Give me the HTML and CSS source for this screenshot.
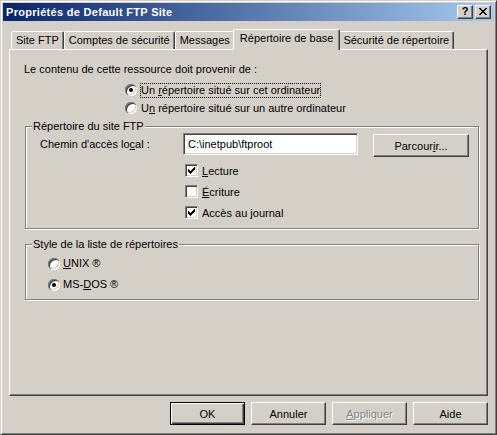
FILE: index.html
```html
<!DOCTYPE html>
<html lang="fr">
<head>
<meta charset="utf-8">
<title>Propriétés de Default FTP Site</title>
<link rel="stylesheet" href="styles.css">
</head>
<body>
<div class="window">
  <div class="titlebar">
    <span class="title">Propriétés de Default FTP Site</span>
    <div class="cbtns">
      <span class="cbtn help">?</span>
      <span class="cbtn close"><svg width="8" height="7" viewBox="0 0 8 7" shape-rendering="crispEdges"><path d="M0 0h2v1H0z M6 0h2v1H6z M1 1h2v1H1z M5 1h2v1H5z M2 2h4v1H2z M3 3h2v1H3z M2 4h4v1H2z M1 5h2v1H1z M5 5h2v1H5z M0 6h2v1H0z M6 6h2v1H6z" fill="#000"/></svg></span>
    </div>
  </div>
  <div class="client">
    <div class="tabs">
      <div class="tab">Site FTP</div>
      <div class="tab">Comptes de sécurité</div>
      <div class="tab">Messages</div>
      <div class="tab active">Répertoire de base</div>
      <div class="tab">Sécurité de répertoire</div>
    </div>
    <div class="panel">
      <div class="intro">Le contenu de cette ressource doit provenir de :</div>
      <div class="source-options">
        <div class="opt"><span class="radio checked"></span><span class="lbl focus">Un <u>r</u>épertoire situé sur cet ordinateur</span></div>
        <div class="opt"><span class="radio"></span><span class="lbl">U<u>n</u> répertoire situé sur un autre ordinateur</span></div>
      </div>
      <div class="group g1">
        <span class="group-label">Répertoire du site FTP</span>
        <div class="path-row">
          <span class="path-label">Chemin d'accès lo<u>c</u>al :</span>
          <div class="edit">C:\inetpub\ftproot</div>
          <div class="btn browse">Parcour<u>i</u>r...</div>
        </div>
        <div class="checks">
          <div class="check"><span class="checkbox"><svg width="7" height="7" viewBox="0 0 7 7" shape-rendering="crispEdges"><path d="M6 0h1v1H6z M5 1h2v1H5z M0 2h1v1H0z M4 2h3v1H4z M0 3h2v1H0z M3 3h3v1H3z M0 4h5v1H0z M1 5h3v1H1z M2 6h1v1H2z" fill="#000"/></svg></span><span><u>L</u>ecture</span></div>
          <div class="check"><span class="checkbox"></span><span><u>É</u>criture</span></div>
          <div class="check"><span class="checkbox"><svg width="7" height="7" viewBox="0 0 7 7" shape-rendering="crispEdges"><path d="M6 0h1v1H6z M5 1h2v1H5z M0 2h1v1H0z M4 2h3v1H4z M0 3h2v1H0z M3 3h3v1H3z M0 4h5v1H0z M1 5h3v1H1z M2 6h1v1H2z" fill="#000"/></svg></span><span>Accès au <u>j</u>ournal</span></div>
        </div>
      </div>
      <div class="group g2">
        <span class="group-label">Style de la liste de répertoires</span>
        <div class="opt2"><span class="radio"></span><span class="lbl"><u>U</u>NIX ®</span></div>
        <div class="opt2"><span class="radio checked"></span><span class="lbl">MS-<u>D</u>OS ®</span></div>
      </div>
    </div>
    <div class="buttons">
      <div class="btn default">OK</div>
      <div class="btn">Annuler</div>
      <div class="btn disabled"><span><u>A</u>ppliquer</span></div>
      <div class="btn">Aide</div>
    </div>
  </div>
</div>
</body>
</html>
```
FILE: styles.css
```css
* { box-sizing: border-box; }
html, body { margin: 0; padding: 0; }
body {
  background: #d4d0c8;
  font: 11px "Liberation Sans", Arial, sans-serif;
  color: #000;
}
.window {
  width: 497px;
  height: 435px;
  border: 1px solid;
  border-color: #d4d0c8 #404040 #404040 #d4d0c8;
  box-shadow: inset 1px 1px #fff, inset -1px -1px #808080;
  padding: 2px;
  display: flex;
  flex-direction: column;
}
.titlebar {
  height: 18px;
  flex: none;
  background: linear-gradient(to right, #0a246a, #a6caf0);
  display: flex;
  align-items: center;
  padding: 0 3px 0 3px;
}
.title {
  flex: 1;
  color: #fff;
  font-weight: bold;
  line-height: 13px;
  letter-spacing: 0.3px;
  white-space: nowrap;
}
.cbtns { display: flex; gap: 2px; }
.cbtn {
  width: 16px;
  height: 14px;
  background: #d4d0c8;
  border: 1px solid;
  border-color: #fff #404040 #404040 #fff;
  box-shadow: inset -1px -1px #808080;
  display: flex;
  align-items: center;
  justify-content: center;
}
.cbtn.help {
  font-weight: bold;
  font-size: 11px;
  line-height: 1;
  padding-bottom: 1px;
}
.cbtn.close svg { display: block; margin-top: -1px; }
.client {
  flex: 1;
  display: flex;
  flex-direction: column;
  padding: 8px 6px 0;
}
.tabs {
  display: flex;
  align-items: flex-end;
  height: 20px;
  padding-left: 2px;
  flex: none;
}
.tab {
  height: 18px;
  padding: 0 4px;
  border: 1px solid;
  border-bottom: none;
  border-color: #fff #404040 transparent #fff;
  border-radius: 2px 2px 0 0;
  box-shadow: inset -1px 0 #808080;
  line-height: 16px;
  white-space: nowrap;
  background: #d4d0c8;
}
.tab.active {
  height: 21px;
  margin: 0 -2px -1px;
  padding: 0 6px;
  position: relative;
  z-index: 1;
  line-height: 16px;
}
.panel {
  height: 347px;
  flex: none;
  border: 1px solid;
  border-color: #fff #404040 #404040 #fff;
  box-shadow: inset -1px -1px #808080;
  padding: 13px 8px 0 15px;
}
.intro { line-height: 13px; margin-left: -1px; }
.source-options { margin-top: 5px; padding-left: 100px; }
.opt { height: 18px; display: flex; align-items: center; gap: 3px; }
.lbl { padding: 1px; line-height: 13px; white-space: nowrap; }
.focus { outline: 1px dotted #000; outline-offset: -1px; }
.radio {
  flex: none;
  width: 12px;
  height: 12px;
  border-radius: 50%;
  background: #fff;
  box-shadow: inset 1px 1px 0 #808080, inset 2px 2px 0 #404040, inset -1px -1px 0 #fff, inset -2px -2px 0 #d4d0c8;
  display: flex;
  align-items: center;
  justify-content: center;
}
.radio.checked::after {
  content: "";
  width: 4px;
  height: 4px;
  border-radius: 50%;
  background: #000;
}
.group {
  position: relative;
  border: 1px solid #808080;
  box-shadow: inset 1px 1px #fff, 1px 1px #fff;
}
.group-label {
  position: absolute;
  top: -7px;
  left: 6px;
  padding: 0 1px;
  background: #d4d0c8;
  line-height: 13px;
  white-space: nowrap;
}
.g1 { margin-top: 9px; padding: 6px 0 5px 14px; }
.path-row { display: flex; align-items: flex-start; height: 24px; }
.path-label { width: 143px; line-height: 22px; white-space: nowrap; }
.edit {
  width: 175px;
  height: 22px;
  background: #fff;
  border: 1px solid;
  border-color: #808080 #fff #fff #808080;
  box-shadow: inset 1px 1px #404040, inset -1px -1px #d4d0c8;
  padding-left: 4px;
  line-height: 20px;
  white-space: nowrap;
}
.btn {
  height: 23px;
  border: 1px solid;
  border-color: #fff #404040 #404040 #fff;
  box-shadow: inset -1px -1px #808080;
  display: flex;
  align-items: center;
  justify-content: center;
  white-space: nowrap;
  background: #d4d0c8;
}
.browse { width: 96px; margin: 1px 0 0 15px; }
.checks { margin-top: 3px; padding-left: 145px; }
.check { height: 21px; display: flex; align-items: center; gap: 4px; }
.check span:last-child { line-height: 14px; }
.checkbox {
  flex: none;
  width: 13px;
  height: 13px;
  background: #fff;
  border: 1px solid;
  border-color: #808080 #fff #fff #808080;
  box-shadow: inset 1px 1px #404040, inset -1px -1px #d4d0c8;
}
.checkbox svg { display: block; margin: 2px 0 0 2px; }
.g2 { margin-top: 15px; padding: 8px 0 4px 22px; }
.opt2 { height: 21px; display: flex; align-items: center; gap: 2px; }
.buttons {
  display: flex;
  justify-content: flex-end;
  gap: 6px;
  margin-top: 6px;
}
.buttons .btn { width: 75px; }
.btn.default {
  border-color: #000;
  box-shadow: inset 1px 1px #fff, inset -1px -1px #404040, inset -2px -2px #808080;
}
.btn.disabled { color: #808080; text-shadow: 1px 1px #fff; }
```
